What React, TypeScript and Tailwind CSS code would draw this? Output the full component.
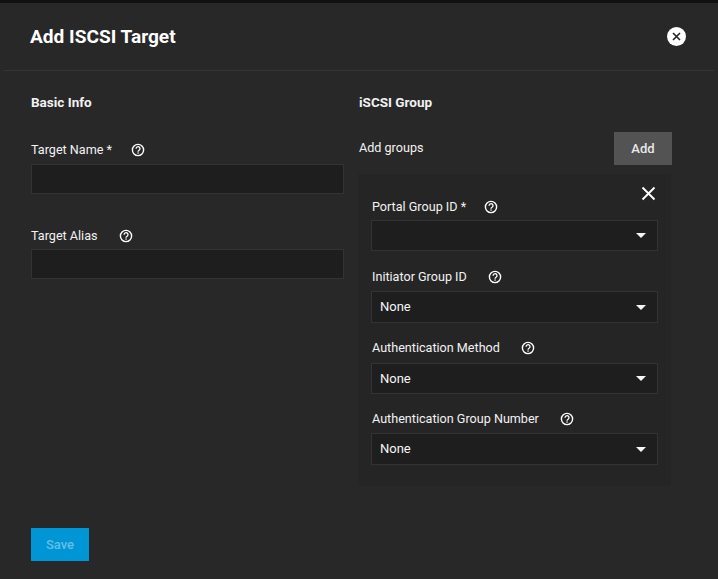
import React from "react";

const Help = () => (
  <svg width="14" height="14" viewBox="0 0 14 14" fill="none" className="shrink-0">
    <circle cx="7" cy="7" r="5.6" stroke="#fff" strokeWidth="1.4" />
    <path d="M5.1 5.7a1.95 1.95 0 1 1 3 1.6c-.7.45-1.1.8-1.1 1.4" stroke="#fff" strokeWidth="1.3" fill="none" />
    <rect x="6.4" y="9.4" width="1.3" height="1.3" fill="#fff" />
  </svg>
);

const Label = ({ text, gap }: { text: string; gap: string }) => (
  <div className={`flex items-center h-[15px] text-[12.6px] leading-[15px] text-[#f2f2f2] ${gap}`}>
    <span>{text}</span>
    <Help />
  </div>
);

const Select = ({ value, h, mt }: { value?: string; h: string; mt: string }) => (
  <div className={`${mt} flex items-center justify-between ${h} bg-[#1e1e1e] border border-[#333333] pl-[8px] pr-[11px] text-[13px] text-[#f5f5f5]`}>
    <span>{value}</span>
    <span className="w-0 h-0 border-l-[5px] border-r-[5px] border-t-[5px] border-l-transparent border-r-transparent border-t-[#f5f5f5]" />
  </div>
);

export default function App() {
  return (
    <div className="w-[718px] h-[579px] overflow-hidden bg-[#282828] font-['Roboto',sans-serif] flex flex-col">
      <div className="h-[3px] bg-[#111111]" />
      <header className="h-[67px] flex items-center justify-between pl-[30px] pr-[32px]">
        <h1 className="text-[19.1px] font-bold text-white leading-none">Add ISCSI Target</h1>
        <div className="w-[19px] h-[19px] rounded-full bg-white flex items-center justify-center">
          <svg width="11" height="11" viewBox="0 0 11 11" stroke="#222" strokeWidth="1.6" fill="none">
            <path d="M2 2l7 7M9 2l-7 7" />
          </svg>
        </div>
      </header>
      <div className="h-px mx-[4px] bg-[#353535]" />
      <main className="flex pl-[31px] flex-1">
        <section className="w-[313px] pt-[24px]">
          <h2 className="text-[13.5px] leading-[15px] font-bold text-[#f2f2f2]">Basic Info</h2>
          <div className="mt-[32px]">
            <Label text="Target Name *" gap="gap-[19px]" />
          </div>
          <div className="mt-[7px] h-[30px] bg-[#1e1e1e] border border-[#333333]" />
          <div className="mt-[34px]">
            <Label text="Target Alias" gap="gap-[21px]" />
          </div>
          <div className="mt-[6px] h-[30px] bg-[#1e1e1e] border border-[#333333]" />
        </section>
        <section className="w-[313px] ml-[14px] pt-[24px]">
          <h2 className="ml-px text-[13.5px] leading-[15px] font-bold text-[#f2f2f2]">iSCSI Group</h2>
          <div className="mt-[22px] ml-px flex items-center justify-between h-[33px]">
            <span className="text-[12.6px] text-[#f2f2f2]">Add groups</span>
            <button className="w-[58px] h-[33px] bg-[#535353] text-[13px] font-medium text-[#e8e8e8] mr-[-1px]">Add</button>
          </div>
          <div className="relative mt-[9px] h-[312px] bg-[#252525] pl-[13px] pr-[13px] pt-[25px]">
            <svg className="absolute top-[12px] right-[15px]" width="15" height="15" viewBox="0 0 15 15" stroke="#fff" strokeWidth="1.9" fill="none">
              <path d="M1.5 1.5l12 12M13.5 1.5l-12 12" />
            </svg>
            <div className="pl-px"><Label text="Portal Group ID *" gap="gap-[18px]" /></div>
            <Select h="h-[31px]" mt="mt-[6px]" />
            <div className="mt-[18px] pl-px"><Label text="Initiator Group ID" gap="gap-[21px]" /></div>
            <Select value="None" h="h-[32px]" mt="mt-[7px]" />
            <div className="mt-[17px] pl-px"><Label text="Authentication Method" gap="gap-[21px]" /></div>
            <Select value="None" h="h-[31px]" mt="mt-[8px]" />
            <div className="mt-[17px] pl-px"><Label text="Authentication Group Number" gap="gap-[21px]" /></div>
            <Select value="None" h="h-[32px]" mt="mt-[7px]" />
          </div>
        </section>
      </main>
      <div className="pl-[31px] pb-[18px]">
        <button className="w-[58px] h-[33px] bg-[#0095d5] text-[13px] font-medium text-[#66bfe6]">Save</button>
      </div>
    </div>
  );
}
